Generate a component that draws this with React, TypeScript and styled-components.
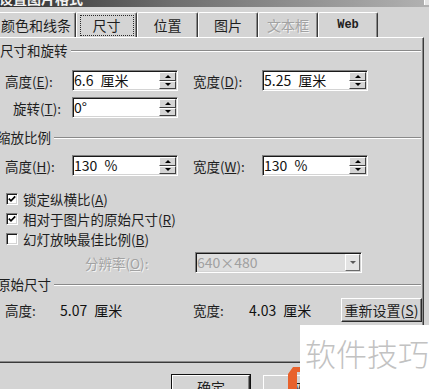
import React from "react";
import styled, { createGlobalStyle } from "styled-components";

const GlobalStyle = createGlobalStyle`
  html, body {
    margin: 0;
    padding: 0;
    background: #d4d4d4;
    overflow: hidden;
  }
  body {
    font-family: "Noto Sans CJK SC", "Noto Sans", sans-serif;
    font-size: 13.5px;
    color: #1e1e1e;
  }
`;

const Page = styled.div`
  position: relative;
  width: 429px;
  height: 389px;
  overflow: hidden;
`;

/* the dialog runs a few pixels off the left edge of the shot */
const Dialog = styled.div`
  width: 437px;
  height: 389px;
  margin-left: -4px;
  overflow: hidden;
  background: #d4d4d4;
`;

const TitleBar = styled.div`
  height: 24px;
  margin-top: -17px;
  display: flex;
  justify-content: space-between;
  align-items: flex-end;
  padding-left: 3px;
  background: linear-gradient(to right, #2e2e2e, #6e6e6e 40%, #b3b3b3);
  color: #f2f2f2;
  font-weight: 700;
  font-size: 14px;
  line-height: 17px;
`;

const TitleButton = styled.span`
  width: 8px;
  height: 18px;
  margin-bottom: 2px;
  background: #e4e4e4;
  border-top: 1px solid #fff;
  border-left: 1px solid #fff;
`;

const TabStrip = styled.div`
  display: flex;
  height: 25px;
  margin-top: 5px;
`;

const Tab = styled.div<{ $w: number; $disabled?: boolean }>`
  width: ${p => p.$w}px;
  box-sizing: border-box;
  display: flex;
  align-items: center;
  justify-content: center;
  border-top: 1px solid #fff;
  border-left: 1px solid #fff;
  border-right: 1px solid #3a3a3a;
  border-radius: 2px 2px 0 0;
  box-shadow: inset -1px 0 #8a8a8a;
  color: ${p => (p.$disabled ? "#a2a2a2" : "#1e1e1e")};
  text-shadow: ${p => (p.$disabled ? "1px 1px 0 #f2f2f2" : "none")};
  font-size: 14px;
`;

const FocusBox = styled.span`
  height: 19px;
  padding: 0 12px;
  display: flex;
  align-items: center;
  outline: 1px dotted #2a2a2a;
`;

const WebLabel = styled.span`
  font-family: "Liberation Mono", "DejaVu Sans Mono", monospace;
  font-weight: 700;
  font-size: 12px;
`;

const Panel = styled.div`
  width: 428px;
  height: 326px;
  box-sizing: border-box;
  padding-top: 5px;
  border-top: 1px solid #fff;
  border-left: 1px solid #fff;
  border-right: 1px solid #3a3a3a;
  border-bottom: 1px solid #3a3a3a;
  box-shadow: inset -1px -1px #8a8a8a;
  display: flex;
  flex-direction: column;
`;

const Section = styled.div<{ $top: number; $indent?: number }>`
  display: flex;
  align-items: center;
  gap: 3px;
  height: 14px;
  line-height: 14px;
  margin-top: ${p => p.$top}px;
  padding-left: ${p => p.$indent ?? 0}px;
  padding-right: 2px;
  white-space: nowrap;

  &::after {
    content: "";
    flex: 1;
    margin-top: 2px;
    border-top: 1px solid #8a8a8a;
    border-bottom: 1px solid #fff;
  }
`;

const FieldRow = styled.div<{ $top: number }>`
  display: grid;
  grid-template-columns: 67px 121px 69px 106px;
  align-items: center;
  height: 21px;
  margin-top: ${p => p.$top}px;
  padding-left: 8px;
`;

const Label = styled.span<{ $indent?: number; $disabled?: boolean }>`
  padding-left: ${p => p.$indent ?? 0}px;
  white-space: nowrap;
  color: ${p => (p.$disabled ? "#a2a2a2" : "inherit")};
  text-shadow: ${p => (p.$disabled ? "1px 1px 0 #f2f2f2" : "none")};
`;

const Field = styled.div<{ $w: number; $disabled?: boolean }>`
  width: ${p => p.$w}px;
  height: 21px;
  box-sizing: border-box;
  display: flex;
  padding: 1px;
  background: ${p => (p.$disabled ? "#dedede" : "#fff")};
  border-top: 1px solid #808080;
  border-left: 1px solid #808080;
  border-right: 1px solid #fff;
  border-bottom: 1px solid #fff;
  box-shadow: inset 1px 1px #1a1a1a, inset -1px -1px #d4d4d4;
`;

const Value = styled.span<{ $disabled?: boolean }>`
  flex: 1;
  line-height: 17px;
  font-size: 14px;
  word-spacing: 4px;
  white-space: pre;
  color: ${p => (p.$disabled ? "#a0a0a0" : "#111")};
`;

const Spin = styled.div`
  width: 17px;
  display: flex;
  flex-direction: column;
`;

const SpinButton = styled.div`
  flex: 1;
  box-sizing: border-box;
  display: flex;
  align-items: center;
  justify-content: center;
  background: #d4d4d4;
  border-top: 1px solid #fff;
  border-left: 1px solid #fff;
  border-right: 1px solid #404040;
  border-bottom: 1px solid #404040;
`;

const Arrow = styled.span<{ $down?: boolean; $color?: string }>`
  width: 0;
  height: 0;
  border-left: 3px solid transparent;
  border-right: 3px solid transparent;
  ${p =>
    p.$down
      ? `border-top: 3px solid ${p.$color ?? "#000"};`
      : `border-bottom: 3px solid ${p.$color ?? "#000"};`}
`;

const DropButton = styled.div`
  width: 15px;
  box-sizing: border-box;
  display: flex;
  align-items: center;
  justify-content: center;
  background: #e4e4e4;
  border-top: 1px solid #fff;
  border-left: 1px solid #fff;
  border-right: 1px solid #6a6a6a;
  border-bottom: 1px solid #6a6a6a;
`;

const Checks = styled.div`
  margin-top: 13px;
  display: flex;
  flex-direction: column;
`;

const CheckRow = styled.label`
  height: 20px;
  display: flex;
  align-items: center;
  gap: 5px;
  padding-left: 9px;
  white-space: nowrap;
`;

const Box = styled.span`
  width: 12px;
  height: 12px;
  box-sizing: border-box;
  display: flex;
  align-items: center;
  justify-content: center;
  background: #fff;
  border-top: 1px solid #808080;
  border-left: 1px solid #808080;
  border-right: 1px solid #fff;
  border-bottom: 1px solid #fff;
  box-shadow: inset 1px 1px #1a1a1a, inset -1px -1px #d4d4d4;
`;

const ResRow = styled.div`
  display: grid;
  grid-template-columns: 110px 167px;
  align-items: center;
  height: 21px;
  margin-top: 3px;
  padding-left: 88px;
`;

const OrigRow = styled.div`
  display: grid;
  grid-template-columns: 55px 133px 56px 92px 81px;
  align-items: center;
  height: 24px;
  margin-top: 7px;
  padding-left: 8px;
  white-space: nowrap;
`;

const Button = styled.div<{ $w: number; $default?: boolean }>`
  width: ${p => p.$w}px;
  height: ${p => (p.$default ? 23 : 24)}px;
  box-sizing: border-box;
  display: flex;
  align-items: center;
  justify-content: center;
  background: #d4d4d4;
  font-size: 14px;
  white-space: nowrap;
  border-top: 1px solid #fff;
  border-left: 1px solid #fff;
  border-right: 1px solid #2a2a2a;
  border-bottom: 1px solid #2a2a2a;
  box-shadow: ${p =>
    p.$default
      ? "0 0 0 1px #111, inset -1px -1px #808080"
      : "inset -1px -1px #808080"};
`;

const Footer = styled.div`
  display: flex;
  gap: 13px;
  margin-top: 12px;
  padding-left: 176px;
`;

const Watermark = styled.div`
  position: absolute;
  right: 0;
  bottom: 0;
  width: 129px;
  height: 64px;
  box-sizing: border-box;
  padding: 12px 0 0 5px;
  background: #fff;
  color: #c2c2c2;
  font-size: 31px;
  font-weight: 300;
  line-height: 31px;
  white-space: nowrap;
`;

const Logo = styled.svg`
  position: absolute;
  left: -12px;
  top: 42px;
`;

const Spinner = () => (
  <Spin>
    <SpinButton>
      <Arrow />
    </SpinButton>
    <SpinButton>
      <Arrow $down />
    </SpinButton>
  </Spin>
);

const SpinField = ({ value }: { value: string }) => (
  <Field $w={106}>
    <Value>{value}</Value>
    <Spinner />
  </Field>
);

const Check = ({ checked, children }: { checked?: boolean; children: React.ReactNode }) => (
  <CheckRow>
    <Box>
      {checked && (
        <svg width="8" height="8" viewBox="0 0 8 8">
          <polyline points="0.8,3.6 3,5.8 7.2,1.4" fill="none" stroke="#000" strokeWidth="1.7" />
        </svg>
      )}
    </Box>
    <span>{children}</span>
  </CheckRow>
);

const App = () => (
  <Page>
    <GlobalStyle />
    <Dialog>
      <TitleBar>
        <span>设置图片格式</span>
        <TitleButton />
      </TitleBar>

      <TabStrip>
        <Tab $w={80}>颜色和线条</Tab>
        <Tab $w={61}>
          <FocusBox>尺寸</FocusBox>
        </Tab>
        <Tab $w={61}>位置</Tab>
        <Tab $w={60}>图片</Tab>
        <Tab $w={60} $disabled>文本框</Tab>
        <Tab $w={60}>
          <WebLabel>Web</WebLabel>
        </Tab>
      </TabStrip>

      <Panel>
        <Section $top={0} $indent={3}>尺寸和旋转</Section>
        <FieldRow $top={13}>
          <Label>高度(<u>E</u>):</Label>
          <SpinField value="6.6 厘米" />
          <Label>宽度(<u>D</u>):</Label>
          <SpinField value="5.25 厘米" />
        </FieldRow>
        <FieldRow $top={6}>
          <Label $indent={8}>旋转(<u>T</u>):</Label>
          <SpinField value="0°" />
        </FieldRow>

        <Section $top={12}>缩放比例</Section>
        <FieldRow $top={11}>
          <Label>高度(<u>H</u>):</Label>
          <SpinField value="130 %" />
          <Label>宽度(<u>W</u>):</Label>
          <SpinField value="130 %" />
        </FieldRow>

        <Checks>
          <Check checked>锁定纵横比(<u>A</u>)</Check>
          <Check checked>相对于图片的原始尺寸(<u>R</u>)</Check>
          <Check>幻灯放映最佳比例(<u>B</u>)</Check>
        </Checks>

        <ResRow>
          <Label $disabled>分辨率(<u>O</u>):</Label>
          <Field $w={167} $disabled>
            <Value $disabled>640×480</Value>
            <DropButton>
              <Arrow $down $color="#5a5a5a" />
            </DropButton>
          </Field>
        </ResRow>

        <Section $top={4}>原始尺寸</Section>
        <OrigRow>
          <span>高度:</span>
          <Value as="span">5.07 厘米</Value>
          <span>宽度:</span>
          <Value as="span">4.03 厘米</Value>
          <Button $w={81}>重新设置(<u>S</u>)</Button>
        </OrigRow>
      </Panel>

      <Footer>
        <Button $w={78} $default>确定</Button>
        <Button $w={78}>取消</Button>
      </Footer>
    </Dialog>

    <Watermark>
      <Logo width="12" height="22" viewBox="0 0 12 22">
        <polygon points="5,0 12,0 12,5 9,5 9,22 0,22 0,7" fill="#e8622c" />
      </Logo>
      软件技巧
    </Watermark>
  </Page>
);

export default App;
